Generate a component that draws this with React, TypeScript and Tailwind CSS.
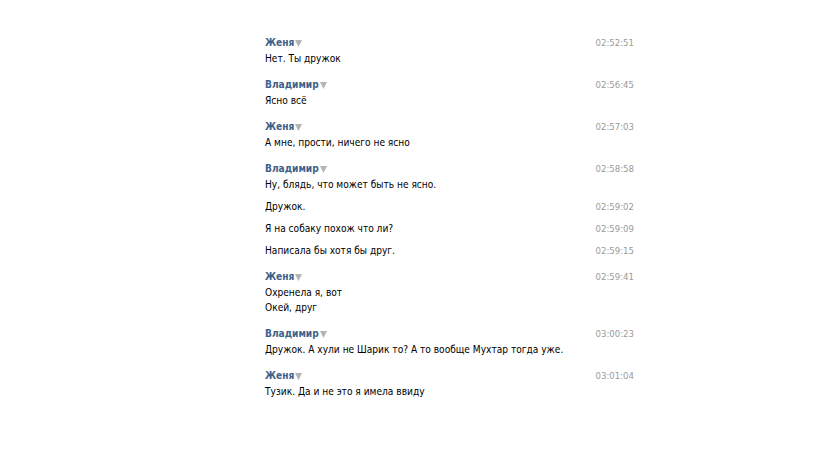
type Msg = { text: string[]; time: string }
type Group = { name: string; messages: Msg[] }

const groups: Group[] = [
  { name: 'Женя', messages: [{ text: ['Нет. Ты дружок'], time: '02:52:51' }] },
  { name: 'Владимир', messages: [{ text: ['Ясно всё'], time: '02:56:45' }] },
  { name: 'Женя', messages: [{ text: ['А мне, прости, ничего не ясно'], time: '02:57:03' }] },
  {
    name: 'Владимир',
    messages: [
      { text: ['Ну, блядь, что может быть не ясно.'], time: '02:58:58' },
      { text: ['Дружок.'], time: '02:59:02' },
      { text: ['Я на собаку похож что ли?'], time: '02:59:09' },
      { text: ['Написала бы хотя бы друг.'], time: '02:59:15' },
    ],
  },
  { name: 'Женя', messages: [{ text: ['Охренела я, вот', 'Окей, друг'], time: '02:59:41' }] },
  {
    name: 'Владимир',
    messages: [{ text: ['Дружок. А хули не Шарик то? А то вообще Мухтар тогда уже.'], time: '03:00:23' }],
  },
  { name: 'Женя', messages: [{ text: ['Тузик. Да и не это я имела ввиду'], time: '03:01:04' }] },
]

function Arrow() {
  return (
    <svg width="7" height="7" viewBox="0 0 7 7" className="ml-[1px] mt-[1px]">
      <path d="M0 0h7L3.5 7z" fill="#b4b4b4" />
    </svg>
  )
}

function Time({ value }: { value: string }) {
  return <span className="text-[9.5px] text-[#9a9a9a] leading-[15px]">{value}</span>
}

export default function App() {
  return (
    <div className="min-h-[460px] w-[819px] bg-white font-['DejaVu_Sans_Condensed','DejaVu_Sans',sans-serif] text-[10.1px] text-black">
      <div className="ml-[265px] w-[369px] pt-[35px]">
        {groups.map((g, gi) => (
          <div key={gi} className="pb-[4px]">
            {g.messages.map((m, mi) => (
              <div key={mi} className="pb-[7px]">
                {mi === 0 ? (
                  <>
                    <div className="flex h-[16px] items-start justify-between">
                      <div className="flex items-center leading-[15px]">
                        <span className="font-bold text-[#3f6088]">{g.name}</span>
                        <Arrow />
                      </div>
                      <Time value={m.time} />
                    </div>
                    <div className="leading-[15px]">
                      {m.text.map((t, ti) => (
                        <div key={ti}>{t}</div>
                      ))}
                    </div>
                  </>
                ) : (
                  <div className="flex justify-between leading-[15px]">
                    <div>
                      {m.text.map((t, ti) => (
                        <div key={ti}>{t}</div>
                      ))}
                    </div>
                    <Time value={m.time} />
                  </div>
                )}
              </div>
            ))}
          </div>
        ))}
      </div>
    </div>
  )
}
